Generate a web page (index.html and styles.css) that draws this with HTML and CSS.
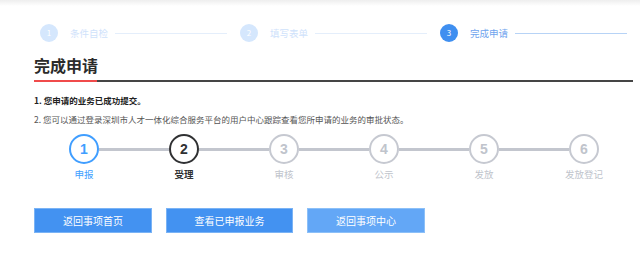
FILE: index.html
```html
<!DOCTYPE html>
<html lang="zh-CN">
<head>
    <meta charset="UTF-8">
    <title>完成申请</title>
    <link rel="stylesheet" href="styles.css">
</head>
<body>
    <div class="top-shadow"></div>

    <div class="wizard">
        <div class="wizard-step done">
            <span class="wizard-num">1</span>
            <span class="wizard-text">条件自检</span>
            <span class="wizard-line"></span>
        </div>
        <div class="wizard-step done">
            <span class="wizard-num">2</span>
            <span class="wizard-text">填写表单</span>
            <span class="wizard-line"></span>
        </div>
        <div class="wizard-step active">
            <span class="wizard-num">3</span>
            <span class="wizard-text">完成申请</span>
            <span class="wizard-line"></span>
        </div>
    </div>

    <main class="content">
        <h2 class="page-title">完成申请</h2>
        <div class="divider"><span class="divider-mark"></span></div>

        <p class="notice notice-strong">1. 您申请的业务已成功提交。</p>
        <p class="notice">2. 您可以通过登录深圳市人才一体化综合服务平台的用户中心跟踪查看您所申请的业务的审批状态。</p>

        <div class="progress">
            <div class="progress-row">
                <span class="node current">1</span>
                <span class="link"></span>
                <span class="node process">2</span>
                <span class="link"></span>
                <span class="node">3</span>
                <span class="link"></span>
                <span class="node">4</span>
                <span class="link"></span>
                <span class="node">5</span>
                <span class="link"></span>
                <span class="node">6</span>
            </div>
            <div class="progress-labels">
                <span class="label current">申报</span>
                <span class="label process">受理</span>
                <span class="label">审核</span>
                <span class="label">公示</span>
                <span class="label">发放</span>
                <span class="label">发放登记</span>
            </div>
        </div>

        <div class="actions">
            <button class="btn">返回事项首页</button>
            <button class="btn btn-wide">查看已申报业务</button>
            <button class="btn btn-light">返回事项中心</button>
        </div>
    </main>
</body>
</html>
```

FILE: styles.css
```css
body {
    margin: 0;
    background-color: #fff;
    font-family: "Noto Sans CJK SC", "Noto Sans", sans-serif;
    color: #333;
}

.top-shadow {
    height: 6px;
    background: linear-gradient(#eeeeee, #ffffff);
}

/* top wizard */
.wizard {
    display: flex;
    margin-top: 18px;
    padding-left: 40px;
}

.wizard-step {
    width: 200px;
    display: flex;
    align-items: center;
    height: 18px;
}

.wizard-num {
    width: 18px;
    height: 18px;
    border-radius: 50%;
    background-color: #d5e7fd;
    color: #fff;
    font-size: 8px;
    line-height: 18px;
    text-align: center;
    flex-shrink: 0;
}

.wizard-text {
    margin-left: 12px;
    font-size: 9.5px;
    color: #cfe2fb;
    white-space: nowrap;
}

.wizard-line {
    flex: 1;
    height: 1px;
    margin: 0 13px 0 7px;
    background-color: #e4eefb;
}

.wizard-step.active .wizard-num {
    background-color: #3f8ff0;
}

.wizard-step.active .wizard-text {
    color: #6fa4ee;
}

.wizard-step.active .wizard-line {
    background-color: #b7d3f6;
}

/* content */
.content {
    padding: 0 7px 0 34px;
}

.page-title {
    margin: 12px 0 0;
    font-size: 16px;
    line-height: 22px;
    font-weight: bold;
    color: #2b2b2b;
}

.divider {
    margin-top: 4px;
    height: 2px;
    background-color: #454545;
}

.divider-mark {
    display: block;
    width: 63px;
    height: 2px;
    background-color: #f04b4b;
}

.notice {
    margin: 5px 0 0;
    font-size: 8.5px;
    line-height: 14px;
    color: #555;
}

.notice-strong {
    margin-top: 11px;
    font-weight: bold;
    color: #222;
}

/* progress */
.progress {
    margin-top: 8px;
}

.progress-row {
    display: flex;
    align-items: center;
    padding-left: 35px;
}

.node {
    width: 26px;
    height: 26px;
    border: 2px solid #c6c9d1;
    border-radius: 50%;
    color: #c0c4cc;
    font-family: "Liberation Sans", Arial, sans-serif;
    font-size: 14px;
    font-weight: bold;
    line-height: 26px;
    text-align: center;
    flex-shrink: 0;
}

.node.current {
    border-color: #409eff;
    color: #409eff;
}

.node.process {
    border-color: #303133;
    color: #303133;
}

.link {
    width: 70px;
    height: 3px;
    background-color: #c3c6ce;
}

.progress-labels {
    display: grid;
    grid-template-columns: repeat(6, 100px);
    margin-top: 3px;
}

.label {
    text-align: center;
    font-size: 9.5px;
    line-height: 14px;
    color: #c0c4cc;
}

.label.current {
    color: #409eff;
}

.label.process {
    color: #303133;
    font-weight: bold;
}

/* actions */
.actions {
    display: flex;
    gap: 14px;
    margin-top: 27px;
}

.btn {
    width: 118px;
    height: 25px;
    padding: 0;
    border: 1px solid #7ab3f5;
    background-color: #4392f1;
    color: #fff;
    font-family: "Noto Sans CJK SC", sans-serif;
    font-size: 10px;
    cursor: pointer;
}

.btn-wide {
    width: 127px;
}

.btn-light {
    background-color: #63a7f6;
    border-color: #8cc0f8;
}
```
